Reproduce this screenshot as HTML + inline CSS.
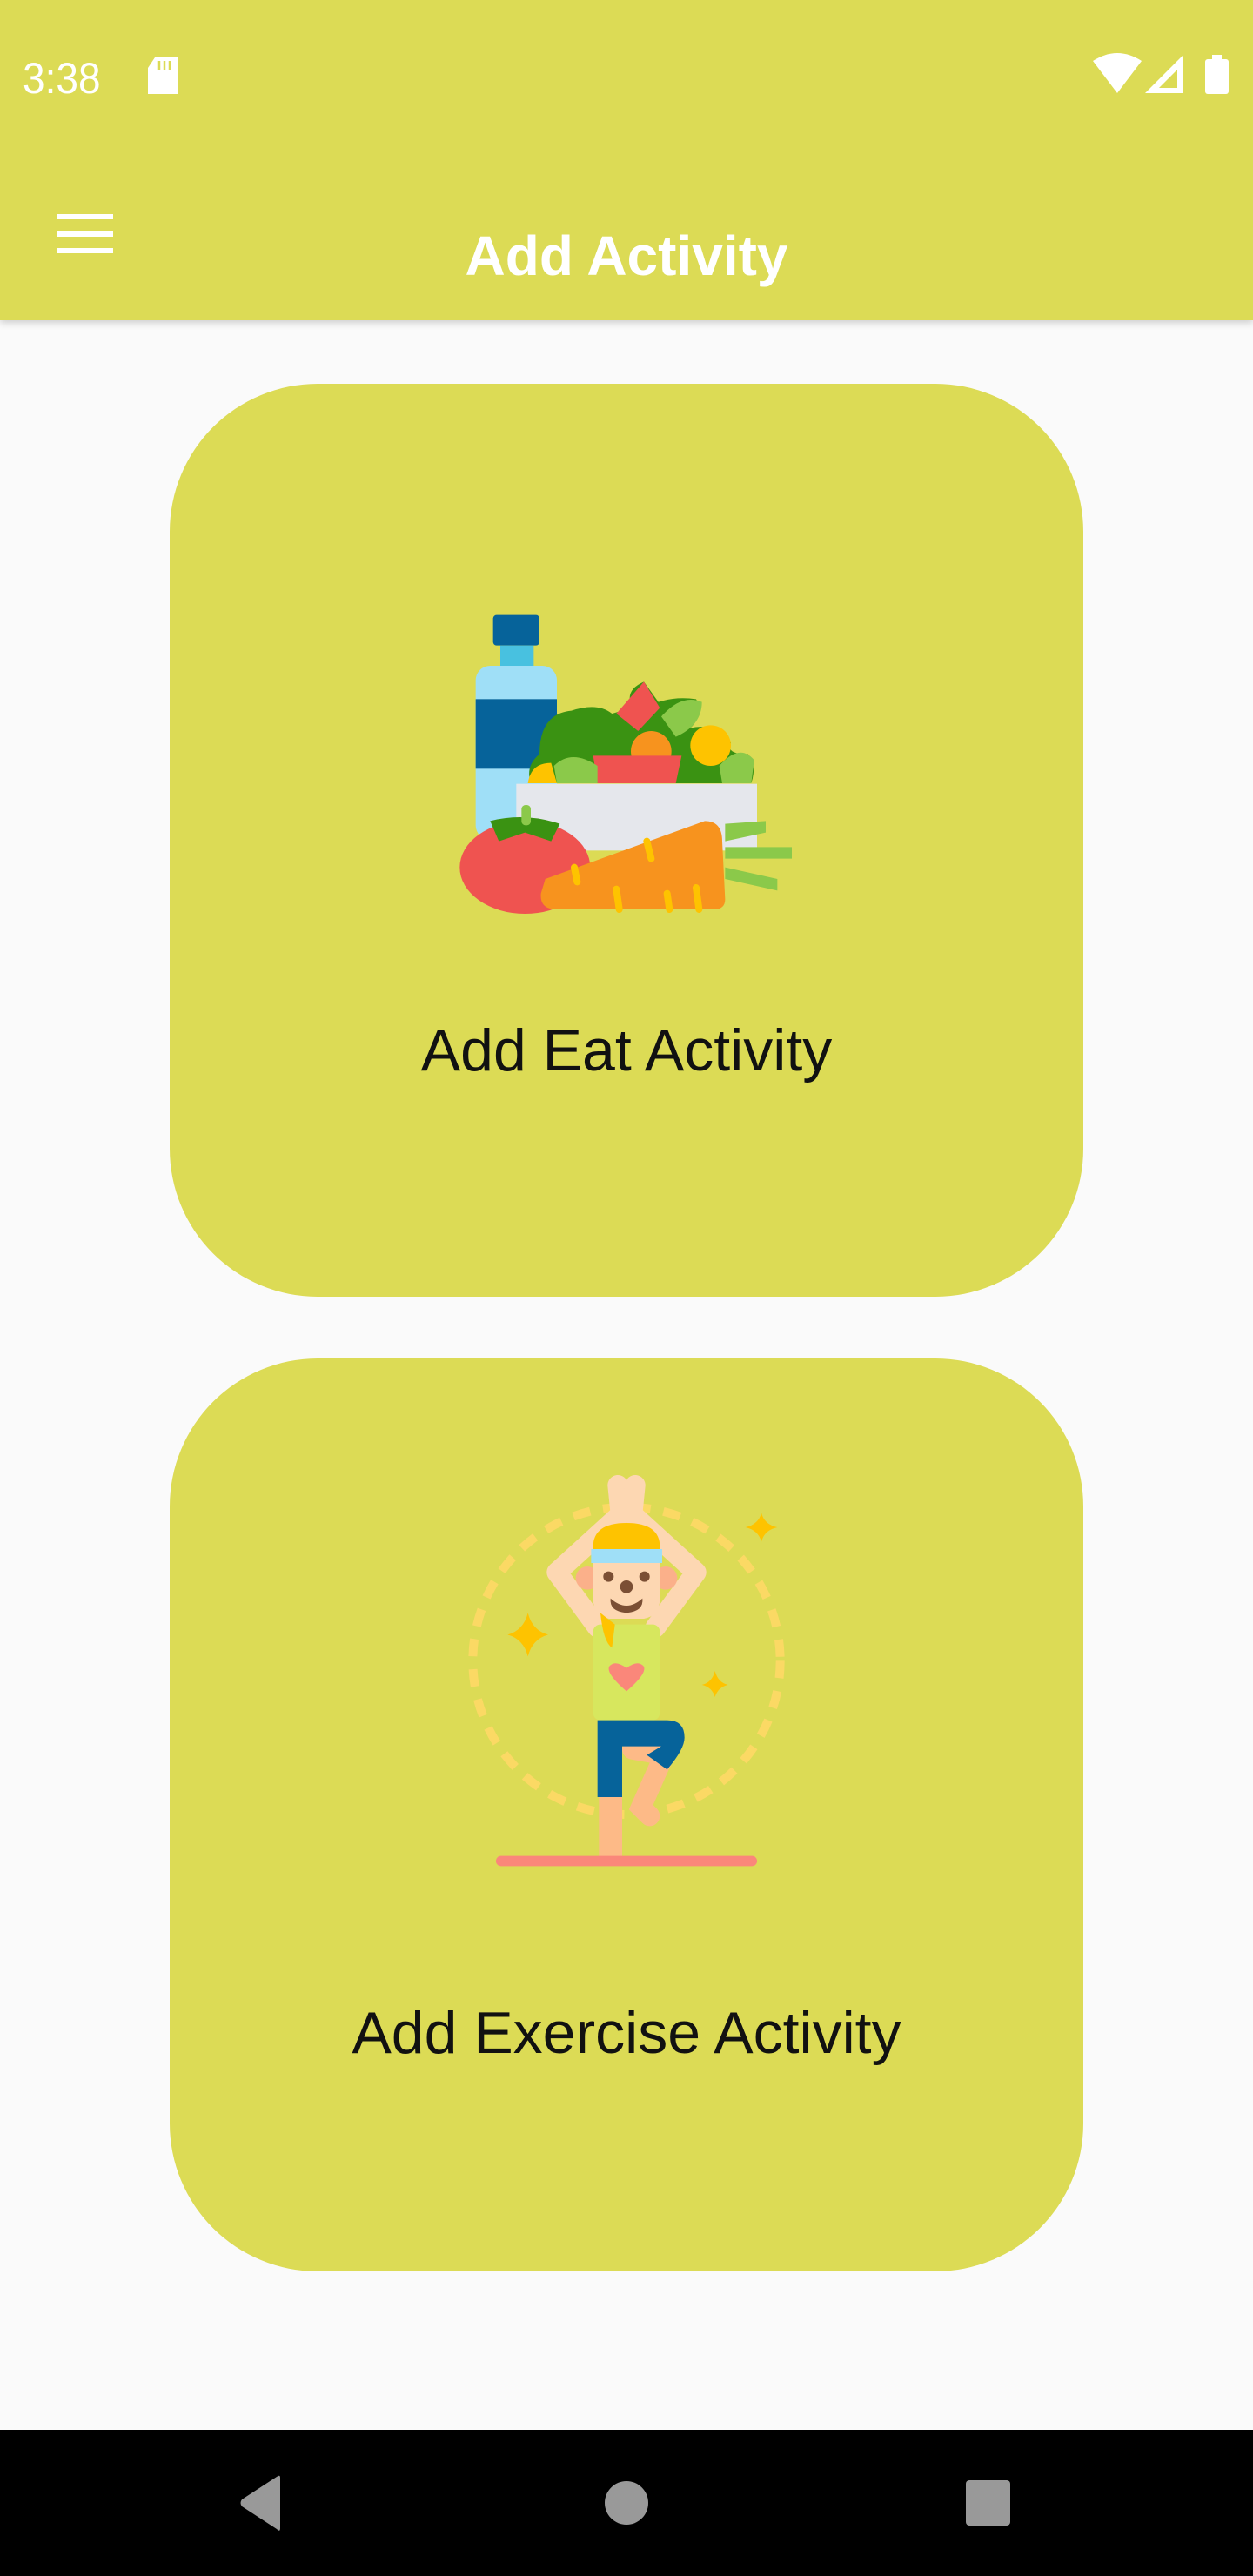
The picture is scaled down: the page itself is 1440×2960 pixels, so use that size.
<!DOCTYPE html>
<html><head><meta charset="utf-8"><style>
*{margin:0;padding:0;box-sizing:border-box}
body{width:1440px;height:2960px;background:#fafafa;position:relative;overflow:hidden;font-family:"Liberation Sans",sans-serif}
.bar{position:absolute;left:0;top:0;width:1440px;height:368px;background:#dcdb55;box-shadow:0 3px 8px rgba(0,0,0,.18)}
.t{position:absolute;white-space:nowrap;line-height:1}
.card{position:absolute;left:195px;width:1050px;height:1049px;background:#dcdb55;border-radius:170px}
.lbl{position:absolute;left:0;width:1440px;text-align:center;font-size:68px;line-height:68px;color:#111}
.nav{position:absolute;left:0;top:2792px;width:1440px;height:168px;background:#000}
</style></head><body>
<div class="bar"></div>
<div class="t" style="left:26px;top:65px;font-size:50px;color:#fff;transform:scaleX(.92);transform-origin:left">3:38</div>
<svg style="position:absolute;left:168px;top:64px" width="40" height="46" viewBox="0 0 40 46"><path d="M10 2h26v42H2V14z" fill="#fff"/><path d="M15 6v10M21 6v10M27 6v10" stroke="#dcdb55" stroke-width="2.5"/></svg>
<svg style="position:absolute;left:1250px;top:58px" width="180" height="56" viewBox="0 0 180 56">
<path d="M6 12 Q34 -6 62 12 L34 49 Z" fill="#fff"/>
<path d="M66 49 L109 6 V49 Z" fill="#fff"/><path d="M82 43 L103 22 V43 Z" fill="#dcdb55"/>
<rect x="135" y="10" width="27" height="40" rx="3" fill="#fff"/><rect x="143" y="5" width="11" height="7" fill="#fff"/>
</svg>
<div style="position:absolute;left:66px;top:246px;width:64px;height:6px;background:#fff"></div>
<div style="position:absolute;left:66px;top:266px;width:64px;height:6px;background:#fff"></div>
<div style="position:absolute;left:66px;top:285px;width:64px;height:6px;background:#fff"></div>
<div class="t" style="left:0;width:1440px;text-align:center;top:262px;font-size:64px;font-weight:bold;color:#fff">Add Activity</div>

<div class="card" style="top:441px"></div>
<svg style="position:absolute;left:500px;top:680px" width="440" height="380" viewBox="0 0 1320 1140">
<rect x="200" y="80" width="160" height="105" rx="12" fill="#06639a"/>
<rect x="225" y="185" width="115" height="80" fill="#48c1e0"/>
<rect x="140" y="255" width="280" height="600" rx="50" fill="#9fdff7"/>
<rect x="140" y="370" width="280" height="240" fill="#06639a"/>
<path d="M360 560 Q360 420 470 410 Q560 380 610 420 L680 400 Q650 340 720 310 L770 380 Q830 360 900 370 Q930 420 880 470 Q960 450 1020 520 Q1000 560 1080 560 Q1110 600 1090 660 L330 660 Q310 600 360 560Z" fill="#3a9212"/>
<path d="M625 420 L720 310 L775 400 L700 480Z" fill="#ef5350"/>
<circle cx="950" cy="530" r="70" fill="#fec300"/>
<circle cx="745" cy="550" r="70" fill="#f7931e"/>
<path d="M545 565 H850 L830 660 H560Z" fill="#ef5350"/>
<path d="M410 600 Q470 540 560 600 L560 660 H420Z" fill="#8bc94a"/>
<path d="M980 600 Q1050 520 1100 580 L1090 660 H990Z" fill="#8bc94a"/>
<path d="M780 430 Q850 350 920 380 Q920 460 830 500Z" fill="#8bc94a"/>
<path d="M320 660 Q330 590 400 590 L420 660Z" fill="#fec300"/>
<rect x="280" y="662" width="830" height="230" fill="#e5e7ec"/>
<path d="M1000 800 L1140 790 L1140 830 L1000 860Z M1000 880 L1230 880 L1230 920 L1000 920Z M1000 950 L1180 990 L1180 1030 L1000 990Z" fill="#8bc94a"/>
<ellipse cx="310" cy="950" rx="225" ry="160" fill="#ef5350"/>
<path d="M190 790 Q310 760 430 800 L400 860 L310 830 L220 860Z" fill="#3a9212"/>
<rect x="298" y="735" width="32" height="70" rx="14" fill="#8bc94a"/>
<path d="M380 990 L930 790 Q990 790 990 860 L1000 1060 Q1000 1095 960 1095 H420 Q360 1095 365 1040Z" fill="#f7931e"/>
<path d="M730 860 l15 60 M480 950 l10 50 M625 1025 l10 70 M800 1040 l8 55 M900 1020 l10 75" stroke="#fec300" stroke-width="24" stroke-linecap="round"/>
</svg>
<div class="lbl" style="top:1173px">Add Eat Activity</div>

<div class="card" style="top:1561px"></div>
<svg style="position:absolute;left:520px;top:1680px" width="400" height="480" viewBox="0 0 1200 1440">
<circle cx="600" cy="685" r="530" fill="none" stroke="#fbd964" stroke-width="30" stroke-dasharray="60 45"/>
<path d="M260 520 Q275 580 330 595 Q275 610 260 670 Q245 610 190 595 Q245 580 260 520Z" fill="#fec300"/>
<path d="M1065 175 Q1075 215 1120 225 Q1075 235 1065 275 Q1055 235 1010 225 Q1055 215 1065 175Z" fill="#fec300"/>
<path d="M905 720 Q915 760 950 768 Q915 776 905 810 Q895 776 860 768 Q895 760 905 720Z" fill="#fec300"/>
<path d="M570 80 L580 180 L360 380 L500 570" fill="none" stroke="#fdd7b2" stroke-width="70" stroke-linejoin="round" stroke-linecap="round"/>
<path d="M630 80 L620 180 L840 380 L700 570" fill="none" stroke="#fdd7b2" stroke-width="70" stroke-linejoin="round" stroke-linecap="round"/>
<circle cx="465" cy="400" r="40" fill="#fbb08a"/><circle cx="735" cy="400" r="40" fill="#fbb08a"/>
<path d="M485 300 Q480 210 600 210 Q720 210 715 300 V470 Q715 530 660 540 H540 Q485 530 485 470Z" fill="#fdd7b2"/>
<path d="M485 300 Q480 210 600 210 Q720 210 715 300Z" fill="#fec300"/>
<rect x="478" y="300" width="245" height="48" fill="#9fdff7"/>
<circle cx="538" cy="395" r="18" fill="#7b4f34"/><circle cx="662" cy="395" r="18" fill="#7b4f34"/><circle cx="600" cy="430" r="22" fill="#7b4f34"/>
<path d="M545 470 Q600 520 655 470 Q660 515 600 520 Q540 515 545 470Z" fill="#7b4f34"/>
<rect x="485" y="560" width="230" height="330" rx="25" fill="#d7e75e"/>
<path d="M510 520 Q520 620 550 640 L560 560Z" fill="#fec300"/>
<path d="M600 790 Q530 730 540 705 Q560 680 600 710 Q640 680 660 705 Q670 730 600 790Z" fill="#fa877a"/>
<path d="M620 990 L730 1010 L650 1190 L680 1220" fill="none" stroke="#fdba87" stroke-width="70" stroke-linecap="round"/>
<rect x="505" y="1140" width="80" height="230" fill="#fdba87"/>
<path d="M500 890 H740 Q800 890 800 950 Q800 990 740 1060 L670 1010 L720 980 H585 V1155 H500Z" fill="#06639a"/>
<rect x="150" y="1358" width="900" height="35" rx="17" fill="#fa877a"/>
</svg>
<div class="lbl" style="top:2302px">Add Exercise Activity</div>

<div class="nav"></div>
<svg style="position:absolute;left:0;top:2792px" width="1440" height="168" viewBox="0 0 1440 168">
<path d="M322 55 V113 Q322 118 318 114 L278 88 Q275 84 278 80 L318 54 Q322 51 322 55Z" fill="#999"/>
<circle cx="720" cy="84" r="25" fill="#999"/>
<rect x="1110" y="58" width="51" height="52" rx="4" fill="#999"/>
</svg>
</body></html>
